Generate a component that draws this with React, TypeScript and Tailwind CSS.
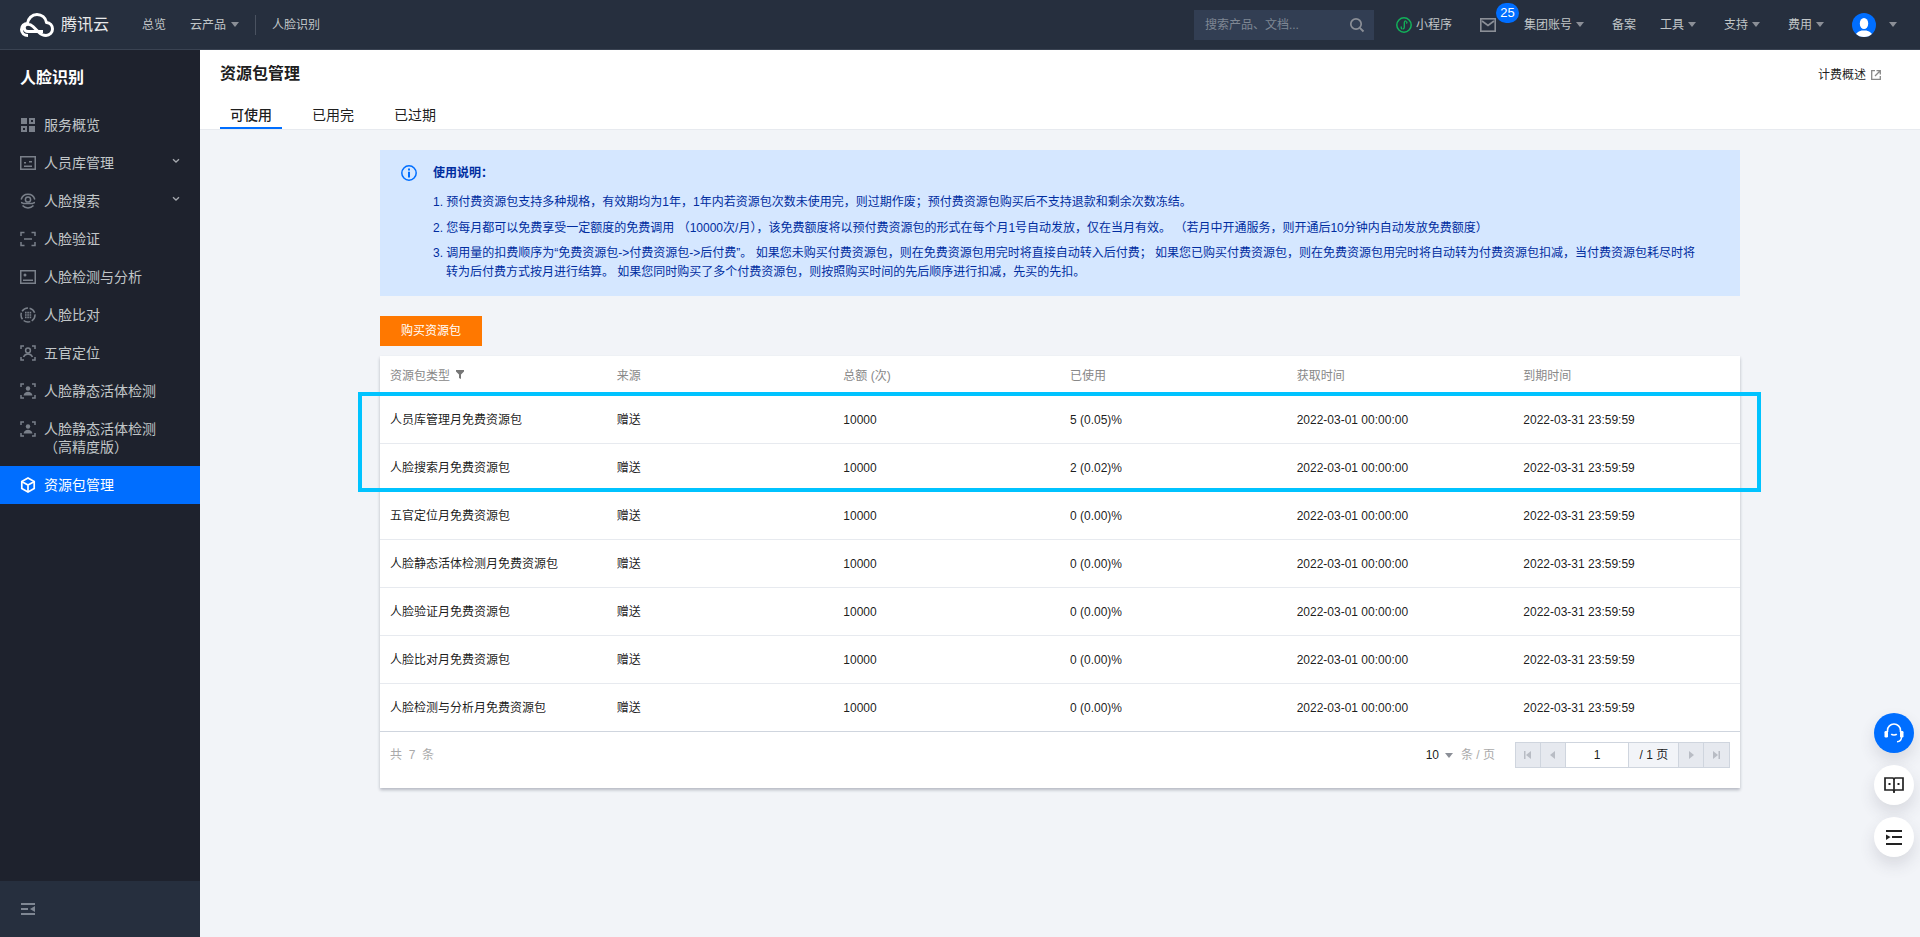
import React from "react";

const Caret = ({ c = "border-t-[#8b8f97]", cls = "" }: { c?: string; cls?: string }) => (
  <span className={`inline-block w-0 h-0 border-l-[4px] border-r-[4px] border-t-[5px] border-l-transparent border-r-transparent ${c} ${cls}`} />
);

const ic = "#7a808a";
const I = ({ children, cls = "" }: { children: React.ReactNode; cls?: string }) => (
  <svg width="16" height="16" viewBox="0 0 16 16" fill="none" className={`shrink-0 ${cls}`}>{children}</svg>
);

const liveIcon = (
  <>
    <path d="M1 4V1h3M12 1h3v3M15 12v3h-3M4 15H1v-3" stroke={ic} strokeWidth="1.5" />
    <circle cx="8" cy="5.5" r="2.2" fill={ic} />
    <path d="M3.5 12.5c.6-2.5 2.3-3.700 4.500-3.700s3.900 1.200 4.500 3.700z" fill={ic} />
  </>
);

const icons: Record<string, React.ReactNode> = {
  overview: (
    <I>
      <path d="M1 1h6v6H1zM1 9h6v6H1zM9 9h6v6H9z" fill={ic} />
      <path d="M9 1h6v6H9z" fill={ic} />
      <path d="M3 11h2v2H3zM11 3h2v2h-2z" fill="#1e222d" />
    </I>
  ),
  lib: (
    <I>
      <rect x="0.75" y="1.75" width="14.5" height="12.5" stroke={ic} strokeWidth="1.5" />
      <path d="M4 7h2v1.5H4zM9 6h3v1.5H9zM4 10.5h8V12H4z" fill={ic} />
    </I>
  ),
  search: (
    <I>
      <circle cx="8" cy="6.5" r="2.6" stroke={ic} strokeWidth="1.5" />
      <path d="M1.2 6.5a7 7 0 0 1 13.6 0M1 9.5c1.5 0 2 1 3 1h8c1 0 1.5-1 3-1M2.5 12.5a7.5 7.5 0 0 0 11 0" stroke={ic} strokeWidth="1.5" />
    </I>
  ),
  verify: (
    <I>
      <path d="M1 5V1.5h3.5M11.5 1.5H15V5M15 11v3.5h-3.5M4.5 14.5H1V11" stroke={ic} strokeWidth="1.5" />
      <path d="M4 8h8" stroke={ic} strokeWidth="1.5" />
    </I>
  ),
  detect: (
    <I>
      <rect x="0.75" y="1.75" width="14.5" height="12.5" stroke={ic} strokeWidth="1.5" />
      <circle cx="5" cy="6" r="1.5" fill={ic} />
      <path d="M3 10.5h10V12H3z" fill={ic} />
    </I>
  ),
  compare: (
    <I>
      <circle cx="8" cy="8" r="7" stroke={ic} strokeWidth="1.5" strokeDasharray="7 1.6" />
      <path d="M5 4.8h1.6v1.6H5zM7.3 4.8h1.6v1.6H7.3zM9.6 4.8h1.6v1.6H9.6zM5 7.2h1.6v1.6H5zM7.3 7.2h1.6v1.6H7.3zM9.6 7.2h1.6v1.6H9.6zM5 9.6h1.6v1.6H5zM7.3 9.6h1.6v1.6H7.3zM9.6 9.6h1.6v1.6H9.6z" fill={ic} />
    </I>
  ),
  locate: (
    <I>
      <path d="M1 4V1h3M12 1h3v3M15 12v3h-3M4 15H1v-3" stroke={ic} strokeWidth="1.5" />
      <circle cx="8" cy="5.5" r="2.4" stroke={ic} strokeWidth="1.5" />
      <path d="M3.5 12c1-2.2 2.6-3 4.5-3s3.5.8 4.5 3" stroke={ic} strokeWidth="1.5" />
    </I>
  ),
  live: <I>{liveIcon}</I>,
  box: (
    <I>
      <path d="M8 1l6.200 3.500v7L8 15l-6.200-3.500v-7z" stroke="#fff" strokeWidth="1.7" />
      <path d="M2 4.700L8 8l6-3.300M8 8v7" stroke="#fff" strokeWidth="1.7" />
    </I>
  ),
};

const Chevron = () => (
  <svg width="8" height="6" viewBox="0 0 8 6" fill="none" className="absolute left-[172px] top-[14px]">
    <path d="M1 1.200L4 4l3-2.800" stroke="#a6a9af" strokeWidth="1.3" />
  </svg>
);

const menu = [
  { k: "overview", t: "服务概览" },
  { k: "lib", t: "人员库管理", ch: true },
  { k: "search", t: "人脸搜索", ch: true },
  { k: "verify", t: "人脸验证" },
  { k: "detect", t: "人脸检测与分析" },
  { k: "compare", t: "人脸比对" },
  { k: "locate", t: "五官定位" },
  { k: "live", t: "人脸静态活体检测" },
];

const rows = [
  ["人员库管理月免费资源包", "5 (0.05)%"],
  ["人脸搜索月免费资源包", "2 (0.02)%"],
  ["五官定位月免费资源包", "0 (0.00)%"],
  ["人脸静态活体检测月免费资源包", "0 (0.00)%"],
  ["人脸验证月免费资源包", "0 (0.00)%"],
  ["人脸比对月免费资源包", "0 (0.00)%"],
  ["人脸检测与分析月免费资源包", "0 (0.00)%"],
];

const Logo = () => (
  <svg width="34" height="24" viewBox="0 0 34 24" fill="none" className="shrink-0">
    <path
      d="M8 22.500C4.200 22.500 1.500 20 1.500 16.500S4.200 10.500 7.500 10.500c.5-5 4.500-9 9.500-9 4.700 0 8.600 3.200 9.500 8 3.600.2 6 3 6 6.500s-2.800 6.500-6.500 6.500c-3 0-5-1-7-3l-6-6c-1.600-1.600-3-2.300-5-2.300-2.200 0-3.800 1.500-3.800 3.500s1.600 3.800 3.800 3.800h15"
      stroke="#fff"
      strokeWidth="3"
      strokeLinejoin="round"
    />
  </svg>
);

const NavBtn = ({ children }: { children: React.ReactNode }) => (
  <div className="w-[25px] h-full flex items-center justify-center bg-[#e6e9ef] border-r border-[#cfd5de] last:border-r-0">{children}</div>
);

export default function App() {
  return (
    <div className="h-screen w-full overflow-hidden flex flex-col bg-[#f2f4f8] text-xs text-[#000000e6] [font-family:'Liberation_Sans','Noto_Sans_CJK_SC',sans-serif]">
      {/* top bar */}
      <header className="h-[50px] shrink-0 bg-[#262f3e] border-b border-[#3a4352] flex items-center text-[#c1c6c8] pl-[20px]">
        <Logo />
        <span className="ml-[7px] mt-[1px] text-[16px] text-[#e8e9ea] w-[48px] whitespace-nowrap">腾讯云</span>
        <span className="ml-[33px]">总览</span>
        <span className="ml-[24px]">云产品</span>
        <Caret cls="ml-[5px]" />
        <span className="ml-[16px] w-px h-[20px] bg-[#4a5260]" />
        <span className="ml-[16px]">人脸识别</span>
        <div className="ml-auto flex items-center">
          <div className="w-[180px] h-[30px] bg-[#323e53] flex items-center justify-between pl-[11px] pr-[9px] text-[#7f8793]">
            <span>搜索产品、文档...</span>
            <svg width="16" height="16" viewBox="0 0 16 16" fill="none">
              <circle cx="7" cy="7" r="5.2" stroke="#8b8f97" strokeWidth="1.7" />
              <path d="M10.800 10.800L14.500 14.500" stroke="#8b8f97" strokeWidth="1.9" />
            </svg>
          </div>
          <svg width="16" height="16" viewBox="0 0 16 16" fill="none" className="ml-[22px]">
            <circle cx="8" cy="8" r="7.2" stroke="#12b25a" strokeWidth="1.5" />
            <path d="M8.300 5.500v4.800c0 1-.8 1.800-1.700 1.800M8.300 5.700c0-1 .8-1.800 1.800-1.800M5.500 9.500c-.6.800-.3 2 .5 2.400M10.500 6.600c.6-.7.400-1.700-.1-2.300" stroke="#12b25a" strokeWidth="1.3" />
          </svg>
          <span className="ml-[4px] mr-[28px]">小程序</span>
          <div className="relative w-[16px] h-[14px] mr-[28px]">
            <svg width="16" height="14" viewBox="0 0 16 14" fill="none">
              <rect x="0.8" y="0.8" width="14.4" height="12.4" stroke="#8b8f97" strokeWidth="1.6" />
              <path d="M2 3l6 4.500L14 3" stroke="#8b8f97" strokeWidth="1.6" />
            </svg>
            <span className="absolute left-[16px] top-[-15px] w-[23px] h-[20px] rounded-full bg-[#006eff] text-white text-[13px] leading-[20px] text-center">25</span>
          </div>
          <span>集团账号</span>
          <Caret cls="ml-[4px]" />
          <span className="ml-[28px]">备案</span>
          <span className="ml-[24px]">工具</span>
          <Caret cls="ml-[4px]" />
          <span className="ml-[28px]">支持</span>
          <Caret cls="ml-[4px]" />
          <span className="ml-[28px]">费用</span>
          <Caret cls="ml-[4px]" />
          <div className="ml-[28px] w-[24px] h-[24px] rounded-full bg-[#006eff] overflow-hidden">
            <svg width="24" height="24" viewBox="0 0 24 24">
              <ellipse cx="12" cy="10.500" rx="4.200" ry="5.500" fill="#fff" />
              <path d="M3 24c.5-4.500 4-5.500 6.500-6.500h5c2.500 1 6 2 6.500 6.500z" fill="#fff" />
            </svg>
          </div>
          <Caret cls="ml-[13px] mr-[23px]" />
        </div>
      </header>

      <div className="flex-1 flex min-h-0">
        {/* sidebar */}
        <aside className="w-[200px] shrink-0 bg-[#1e222d] flex flex-col text-[14px] text-[#c1c6c8]">
          <div className="h-[56px] pl-[20px] flex items-center text-[16px] font-bold text-white">人脸识别</div>
          {menu.map((m) => (
            <div key={m.t} className="relative h-[38px] pl-[20px] flex items-center gap-[8px]">
              {icons[m.k]}
              <span>{m.t}</span>
              {m.ch && <Chevron />}
            </div>
          ))}
          <div className="h-[56px] pl-[20px] pt-[10px] flex items-start gap-[8px]">
            <I cls="mt-[1px]">{liveIcon}</I>
            <span className="leading-[18px] w-[116px]">人脸静态活体检测（高精度版）</span>
          </div>
          <div className="h-[38px] pl-[20px] flex items-center gap-[8px] bg-[#006eff] text-white">
            {icons.box}
            <span>资源包管理</span>
          </div>
          <div className="mt-auto h-[56px] bg-[#262f3e] pl-[21px] flex items-center">
            <svg width="14" height="12" viewBox="0 0 14 12">
              <path d="M0 0h14v2H0zM0 5h7v2H0zM0 10h14v2H0z" fill="#7f8793" />
              <path d="M14 3v6L9 6z" fill="#7f8793" />
            </svg>
          </div>
        </aside>

        {/* main */}
        <main className="relative flex-1 min-w-0 flex flex-col">
          <div className="h-[80px] shrink-0 bg-white border-b border-[#e7eaef] pl-[20px] pr-[20px] flex flex-col">
            <div className="flex items-center justify-between h-[48px]">
              <h1 className="text-[16px] font-bold text-[#000000e6] leading-[48px]">资源包管理</h1>
              <div className="flex items-center gap-[5px] mr-[19px] mt-[1px]">
                <span>计费概述</span>
                <svg width="10" height="10" viewBox="0 0 10 10" fill="none">
                  <path d="M4 .7H.7v8.600h8.600V6" stroke="#888" strokeWidth="1.3" />
                  <path d="M5.500.7h3.800v3.800M9 1L4 6" stroke="#888" strokeWidth="1.3" />
                </svg>
              </div>
            </div>
            <div className="flex h-[31px] text-[14px]">
              <div className="w-[62px] h-[31px] text-center border-b-2 border-[#006eff] font-medium leading-[34px] mr-[20px]">可使用</div>
              <div className="w-[62px] text-center leading-[34px] mr-[20px]">已用完</div>
              <div className="w-[62px] text-center leading-[34px]">已过期</div>
            </div>
          </div>

          <div className="w-[1360px] ml-[180px] pt-[20px]">
            <div className="h-[146px] bg-[#d5e7ff] text-[#002da0] pl-[21px] pr-[40px] pt-[14px] flex gap-[16px]">
              <svg width="16" height="16" viewBox="0 0 16 16" fill="none" className="shrink-0 mt-[1px]">
                <circle cx="8" cy="8" r="7.2" stroke="#006eff" strokeWidth="1.5" />
                <path d="M7 3.500h2v2H7zM7 6.800h2v5.700H7z" fill="#006eff" />
              </svg>
              <div className="flex-1">
                <p className="font-bold leading-[18px]">使用说明：</p>
                <p className="mt-[11px] leading-[18px] pl-[13px] -indent-[13px]">1. 预付费资源包支持多种规格，有效期均为1年，1年内若资源包次数未使用完，则过期作废；预付费资源包购买后不支持退款和剩余次数冻结。</p>
                <p className="mt-[8px] leading-[18px] pl-[13px] -indent-[13px]">2. 您每月都可以免费享受一定额度的免费调用 （10000次/月），该免费额度将以预付费资源包的形式在每个月1号自动发放，仅在当月有效。 （若月中开通服务，则开通后10分钟内自动发放免费额度）</p>
                <p className="mt-[7px] leading-[19px] pl-[13px] -indent-[13px]">3. 调用量的扣费顺序为“免费资源包-&gt;付费资源包-&gt;后付费”。 如果您未购买付费资源包，则在免费资源包用完时将直接自动转入后付费； 如果您已购买付费资源包，则在免费资源包用完时将自动转为付费资源包扣减，当付费资源包耗尽时将转为后付费方式按月进行结算。 如果您同时购买了多个付费资源包，则按照购买时间的先后顺序进行扣减，先买的先扣。</p>
              </div>
            </div>

            <button className="mt-[20px] block w-[102px] h-[30px] bg-[#ff7800] text-white text-xs">购买资源包</button>

            <div className="relative mt-[10px] bg-white shadow-[0_2px_3px_0_rgba(54,58,80,0.32)]">
              <div className="grid grid-cols-6 h-[39px] items-center text-[#888]">
                <div className="pl-[10px] flex items-center gap-[6px]">
                  资源包类型
                  <svg width="8" height="9" viewBox="0 0 8 9" className="mt-[-3px]"><path d="M0 0h8v1.500L5 4.500V9L3 8V4.500L0 1.500z" fill="#777" /></svg>
                </div>
                <div className="pl-[10px]">来源</div>
                <div className="pl-[10px]">总额 (次)</div>
                <div className="pl-[10px]">已使用</div>
                <div className="pl-[10px]">获取时间</div>
                <div className="pl-[10px]">到期时间</div>
              </div>
              {rows.map((r) => (
                <div key={r[0]} className="grid grid-cols-6 h-[48px] items-center border-t border-[#e7eaef] first-of-type:border-t-0">
                  <div className="pl-[10px]">{r[0]}</div>
                  <div className="pl-[10px]">赠送</div>
                  <div className="pl-[10px]">10000</div>
                  <div className="pl-[10px]">{r[1]}</div>
                  <div className="pl-[10px]">2022-03-01 00:00:00</div>
                  <div className="pl-[10px]">2022-03-31 23:59:59</div>
                </div>
              ))}
              <div className="h-[57px] pb-[10px] border-t border-[#cfd5de] flex items-center justify-between pl-[10px] pr-[10px]">
                <span className="text-[#aaa] whitespace-pre">共  7  条</span>
                <div className="flex items-center">
                  <span>10</span>
                  <Caret cls="ml-[6px]" />
                  <span className="ml-[8px] text-[#aaa]">条 / 页</span>
                  <div className="ml-[20px] h-[26px] w-[215px] flex border border-[#cfd5de]">
                    <NavBtn>
                      <svg width="7" height="8" viewBox="0 0 7 8"><path d="M0 0h1.500v8H0zM7 0v8L2 4z" fill="#b8bcc4" /></svg>
                    </NavBtn>
                    <NavBtn>
                      <svg width="5" height="8" viewBox="0 0 5 8"><path d="M5 0v8L0 4z" fill="#b8bcc4" /></svg>
                    </NavBtn>
                    <div className="w-[64px] bg-white border-r border-[#cfd5de] flex items-center justify-center">1</div>
                    <div className="w-[50px] bg-[#f2f4f8] border-r border-[#cfd5de] flex items-center justify-center">/ 1 页</div>
                    <NavBtn>
                      <svg width="5" height="8" viewBox="0 0 5 8"><path d="M0 0v8l5-4z" fill="#b8bcc4" /></svg>
                    </NavBtn>
                    <NavBtn>
                      <svg width="7" height="8" viewBox="0 0 7 8"><path d="M7 0H5.500v8H7zM0 0v8l5-4z" fill="#b8bcc4" /></svg>
                    </NavBtn>
                  </div>
                </div>
              </div>
              {/* annotation frame */}
              <div className="absolute left-[-22px] top-[36px] w-[1403px] h-[100px] border-[4px] border-[#00c3ff] pointer-events-none" />
            </div>
          </div>

          {/* floating buttons */}
          <div className="absolute right-[6px] top-[663px] flex flex-col gap-[12px]">
            <div className="w-[40px] h-[40px] rounded-full bg-[#006eff] flex items-center justify-center shadow-[0_8px_16px_rgba(54,58,80,0.14)]">
              <svg width="20" height="20" viewBox="0 0 20 20" fill="none">
                <path d="M3.500 9V7.500a6.500 6.500 0 0 1 13 0V9" stroke="#fff" strokeWidth="1.6" />
                <rect x="0.500" y="8" width="3.500" height="6.500" rx="1.200" fill="#fff" />
                <rect x="16" y="8" width="3.500" height="6.500" rx="1.200" fill="#fff" />
                <path d="M7.300 11c.8 1.300 4.600 1.300 5.400 0" stroke="#fff" strokeWidth="1.5" />
                <path d="M17.500 14c0 3-1.500 4.500-4.500 4.800" stroke="#fff" strokeWidth="1.5" />
              </svg>
            </div>
            <div className="w-[40px] h-[40px] rounded-full bg-white flex items-center justify-center shadow-[0_8px_16px_rgba(54,58,80,0.14)]">
              <svg width="20" height="18" viewBox="0 0 20 18" fill="none">
                <path d="M1 2h8l1 1 1-1h8v12h-8l-1 1-1-1H1z" stroke="#222" strokeWidth="1.7" />
                <path d="M10 3v14" stroke="#222" strokeWidth="1.7" />
                <path d="M4.500 7h2v2h-2zM13.500 7h2v2h-2z" fill="#222" />
              </svg>
            </div>
            <div className="w-[40px] h-[40px] rounded-full bg-white flex items-center justify-center shadow-[0_8px_16px_rgba(54,58,80,0.14)]">
              <svg width="16" height="15" viewBox="0 0 16 15">
                <path d="M0 0h16v2H0zM6 6h10v2H6zM0 13h16v2H0z" fill="#222" />
                <path d="M0 4.500v5.500L4.500 7z" fill="#222" />
              </svg>
            </div>
          </div>
        </main>
      </div>
    </div>
  );
}
